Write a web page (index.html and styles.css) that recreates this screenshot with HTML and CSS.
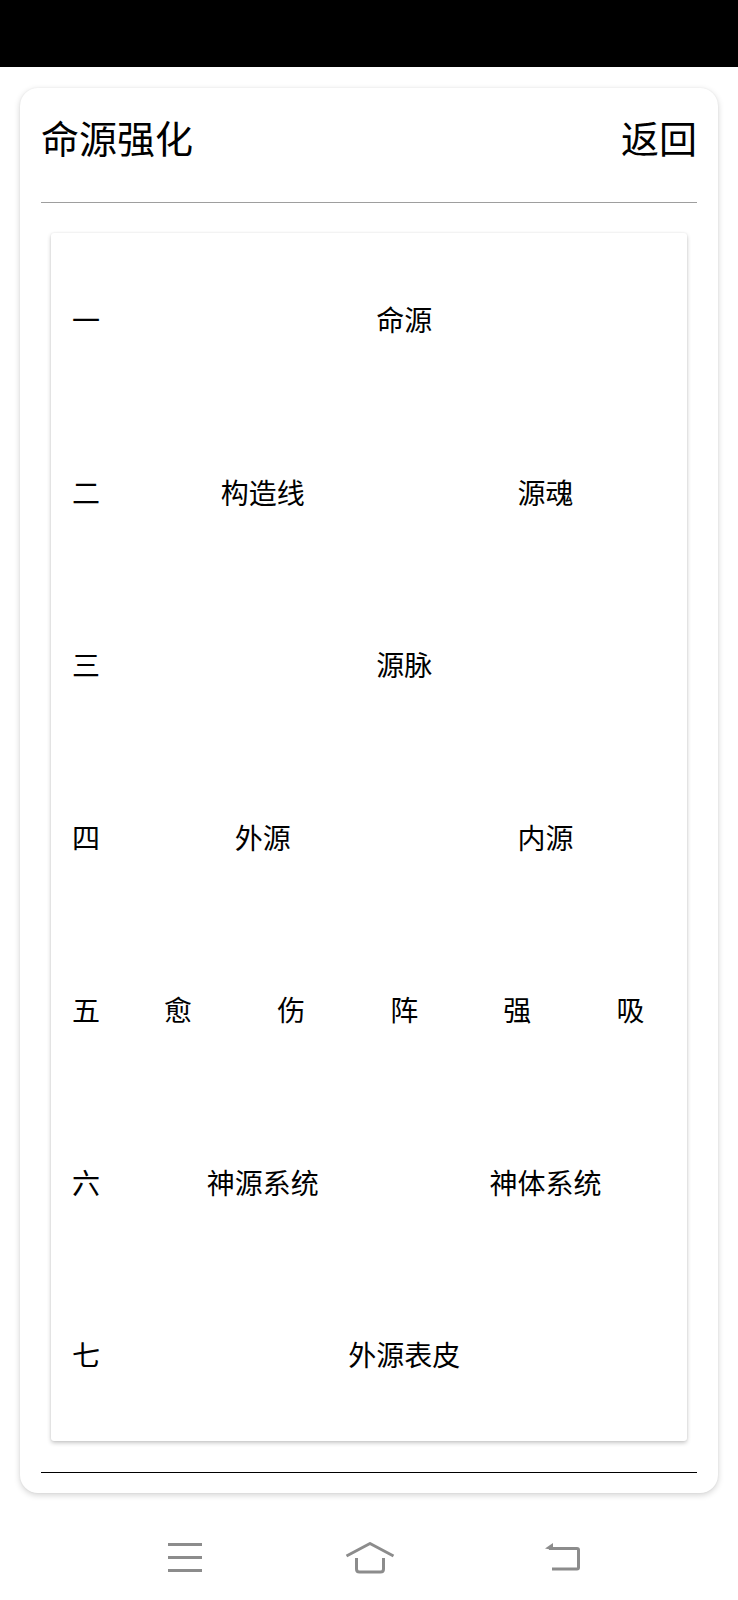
FILE: index.html
```html
<!DOCTYPE html>
<html lang="zh">
<head>
<meta charset="utf-8">
<link rel="stylesheet" href="styles.css">
</head>
<body>
<div class="status"></div>
<div class="card">
  <div class="header">
    <div class="title">命源强化</div>
    <div class="back">返回</div>
  </div>
  <div class="divider"></div>
  <div class="inner">
    <div class="row"><div class="label">一</div><div class="items"><div class="item">命源</div></div></div>
    <div class="row"><div class="label">二</div><div class="items"><div class="item">构造线</div><div class="item">源魂</div></div></div>
    <div class="row"><div class="label">三</div><div class="items"><div class="item">源脉</div></div></div>
    <div class="row"><div class="label">四</div><div class="items"><div class="item">外源</div><div class="item">内源</div></div></div>
    <div class="row"><div class="label">五</div><div class="items"><div class="item">愈</div><div class="item">伤</div><div class="item">阵</div><div class="item">强</div><div class="item">吸</div></div></div>
    <div class="row"><div class="label">六</div><div class="items"><div class="item">神源系统</div><div class="item">神体系统</div></div></div>
    <div class="row"><div class="label">七</div><div class="items"><div class="item">外源表皮</div></div></div>
  </div>
  <div class="divider-dark"></div>
</div>
<div class="nav">
  <svg class="nav-menu" width="40" height="32" viewBox="0 0 40 32"><g stroke="#8c8c8c" stroke-width="3"><line x1="3" y1="2.5" x2="37" y2="2.5"/><line x1="3" y1="15.5" x2="37" y2="15.5"/><line x1="3" y1="28.5" x2="37" y2="28.5"/></g></svg>
  <svg class="nav-home" width="50" height="32" viewBox="0 0 50 32"><g fill="none" stroke="#8c8c8c" stroke-width="3" stroke-linejoin="round"><polyline points="1.5,14 25,1.5 48.5,14"/><path d="M11.5 16 V27 Q11.5 30 14.5 30 H35.5 Q38.5 30 38.5 27 V16"/></g></svg>
  <svg class="nav-back" width="40" height="32" viewBox="0 0 40 32"><g fill="none" stroke="#8c8c8c" stroke-width="3"><path d="M6 6.5 H34 Q35.5 6.5 35.5 8 V25.5 Q35.5 27 34 27 H9"/></g><polygon points="2,6.5 10,1 10,8" fill="#8c8c8c"/></svg>
</div>
</body>
</html>
```
FILE: styles.css
```css
html, body {
  margin: 0;
  padding: 0;
  background: #ffffff;
}
body {
  width: 738px;
  height: 1600px;
  overflow: hidden;
  font-family: "Noto Sans CJK SC", "Noto Sans", sans-serif;
  color: #000;
}
.status {
  height: 67px;
  background: #000;
}
.card {
  margin: 21px 20px 0 20px;
  padding: 0 21px 20px 21px;
  background: #fff;
  border-radius: 18px;
  box-shadow: 0 2px 6px rgba(0, 0, 0, 0.18), 0 0 2px rgba(0, 0, 0, 0.06);
}
.header {
  height: 114px;
  box-sizing: border-box;
  padding-top: 30px;
  display: flex;
  justify-content: space-between;
  align-items: flex-start;
}
.title, .back {
  font-size: 38px;
  line-height: 38px;
}
.divider {
  height: 1px;
  background: #9e9e9e;
}
.inner {
  margin: 30px 10px 0 10px;
  background: #fff;
  border-radius: 3px;
  box-shadow: 0 2px 4px rgba(0, 0, 0, 0.22), 0 0 2px rgba(0, 0, 0, 0.08);
  display: flex;
  flex-direction: column;
}
.row {
  height: 172.5px;
  display: flex;
  align-items: center;
  font-size: 28px;
  line-height: 28px;
}
.label {
  width: 70.5px;
  box-sizing: border-box;
  padding-left: 21px;
  flex: none;
}
.items {
  flex: 1;
  display: flex;
}
.item {
  flex: 1;
  text-align: center;
}
.divider-dark {
  margin-top: 31px;
  height: 1px;
  background: #000;
}
.nav {
  display: flex;
  align-items: flex-start;
  padding-top: 49px;
  padding-left: 165px;
}
.nav svg {
  display: block;
  flex: none;
}
.nav-home {
  margin-left: 140px;
}
.nav-back {
  margin-left: 148px;
}
```
